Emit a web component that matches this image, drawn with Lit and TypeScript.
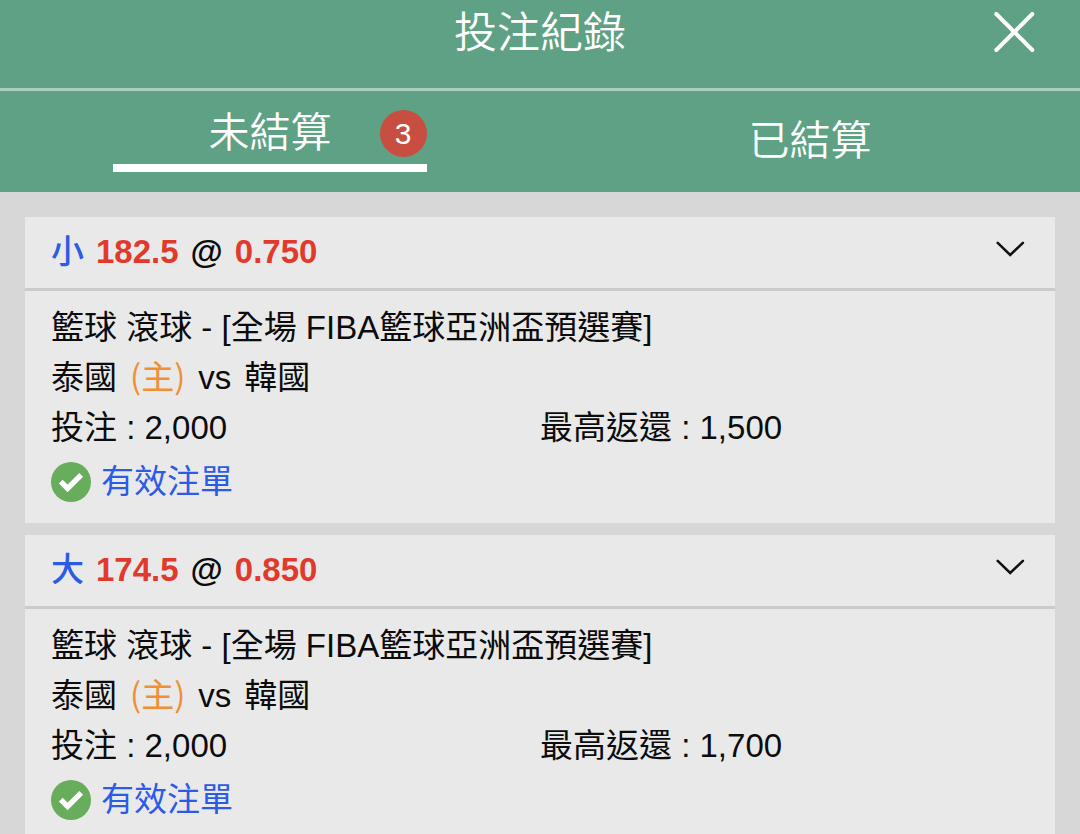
import { LitElement, html, css, nothing } from "lit";
import { customElement, property, state } from "lit/decorators.js";

interface Bet {
  pick: string;
  line: string;
  odds: string;
  event: string;
  home: string;
  away: string;
  stake: string;
  payout: string;
  status: string;
}

const EVENT = "籃球 滾球 - [全場 FIBA籃球亞洲盃預選賽]";

const OPEN_BETS: Bet[] = [
  { pick: "小", line: "182.5", odds: "0.750", event: EVENT, home: "泰國", away: "韓國", stake: "2,000", payout: "1,500", status: "有效注單" },
  { pick: "大", line: "174.5", odds: "0.850", event: EVENT, home: "泰國", away: "韓國", stake: "2,000", payout: "1,700", status: "有效注單" },
];

const reset = css`
  * {
    box-sizing: border-box;
  }
  button {
    margin: 0;
    padding: 0;
    border: 0;
    background: none;
    color: inherit;
    font: inherit;
    cursor: pointer;
  }
  svg {
    display: block;
    flex: none;
  }
`;

@customElement("bet-card")
export class BetCard extends LitElement {
  @property({ attribute: false }) bet!: Bet;
  @state() private open = true;

  static styles = [
    reset,
    css`
      :host {
        display: block;
        background: #e9e9e9;
      }
      .title {
        margin: 0;
        font-size: inherit;
      }
      .summary {
        display: flex;
        align-items: center;
        justify-content: space-between;
        width: 100%;
        padding: 10px 30px 12px 26px;
        border-bottom: 3px solid #cbcbcb;
        line-height: 49px;
        font-weight: 700;
      }
      .selection,
      .teams {
        display: flex;
        align-items: baseline;
        gap: 12px;
      }
      .pick {
        color: #2c5be6;
        font-weight: 500;
      }
      .number {
        color: #e13a2d;
      }
      .details {
        padding: 12px 26px;
        line-height: 50px;
      }
      .details p {
        margin: 0;
      }
      .details .teams {
        gap: 13px;
      }
      .home-mark {
        color: #f08f35;
        font-family: "Noto Sans CJK TC", sans-serif;
        line-height: 1;
      }
      .amounts {
        display: grid;
        grid-template-columns: 1fr 1fr;
      }
      .status {
        display: flex;
        align-items: center;
        gap: 10px;
        min-height: 58px;
        color: #2c5be6;
      }
    `,
  ];

  render() {
    const b = this.bet;
    return html`
      <h2 class="title">
        <button class="summary" type="button" aria-expanded=${this.open} @click=${() => (this.open = !this.open)}>
          <span class="selection">
            <span class="pick">${b.pick}</span>
            <span class="number">${b.line}</span>
            <span>@</span>
            <span class="number">${b.odds}</span>
          </span>
          <svg width="30" height="22" viewBox="0 0 30 22" aria-hidden="true">
            <path d="M2.7 1.9 15.2 14 27.9 1.9" fill="none" stroke="#111" stroke-width="2.5" stroke-linecap="round" />
          </svg>
        </button>
      </h2>
      ${this.open
        ? html`
            <div class="details">
              <p>${b.event}</p>
              <p class="teams">
                <span>${b.home}</span><span class="home-mark">(主)</span><span>vs</span><span>${b.away}</span>
              </p>
              <p class="amounts"><span>投注 : ${b.stake}</span><span>最高返還 : ${b.payout}</span></p>
              <p class="status">
                <svg width="40" height="40" viewBox="0 0 40 40" aria-hidden="true">
                  <circle cx="20" cy="20" r="20" fill="#67ad5b" />
                  <path d="M9.8 19.6 16.6 26.4 30.2 12.8" fill="none" stroke="#fff" stroke-width="5.4" />
                </svg>
                <span>${b.status}</span>
              </p>
            </div>
          `
        : nothing}
    `;
  }
}

@customElement("app-root")
export class AppRoot extends LitElement {
  @state() private tab: "open" | "settled" = "open";

  static styles = [
    reset,
    css`
      :host {
        display: block;
        min-height: 100vh;
        background: #d7d7d7;
        color: #0c0c0c;
        font-family: "Liberation Sans", "Noto Sans CJK TC", sans-serif;
        font-size: 33px;
      }
      .bar {
        display: grid;
        grid-template-columns: 1fr auto 1fr;
        align-items: center;
        padding: 0 45px 22px;
        border-bottom: 3px solid #aacdbd;
        background: #5ea184;
        color: #fff;
      }
      .bar h1 {
        grid-column: 2;
        margin: 0;
        font-size: 43px;
        font-weight: 350;
        line-height: 66px;
      }
      .close {
        justify-self: end;
      }
      .tabs {
        display: grid;
        grid-template-columns: 1fr 1fr;
        align-items: end;
        padding: 12px 0 20px;
        background: #5ea184;
        color: #fff;
        font-size: 41px;
        font-weight: 350;
        line-height: 61px;
      }
      .tab {
        display: grid;
        grid-template-columns: 1fr auto 1fr;
        align-items: center;
        justify-self: center;
        width: 58%;
      }
      .tab[aria-selected="true"] {
        border-bottom: 8px solid #fff;
      }
      .label {
        grid-column: 2;
      }
      .badge {
        justify-self: end;
        width: 47px;
        height: 47px;
        border-radius: 50%;
        background: #c84e42;
        font-size: 30px;
        font-weight: 400;
        line-height: 47px;
      }
      .list {
        display: grid;
        gap: 12px;
        padding: 25px;
      }
    `,
  ];

  render() {
    const open = this.tab === "open";
    return html`
      <header class="bar">
        <h1>投注紀錄</h1>
        <button class="close" type="button" aria-label="關閉">
          <svg width="42" height="42" viewBox="0 0 42 42" aria-hidden="true">
            <path d="M3.3 2 39.3 38M39.3 2 3.3 38" fill="none" stroke="#fff" stroke-width="4" stroke-linecap="round" />
          </svg>
        </button>
      </header>
      <div class="tabs" role="tablist">
        <button class="tab" type="button" role="tab" aria-selected=${open} @click=${() => (this.tab = "open")}>
          <span class="label">未結算</span><span class="badge">3</span>
        </button>
        <button class="tab" type="button" role="tab" aria-selected=${!open} @click=${() => (this.tab = "settled")}>
          <span class="label">已結算</span>
        </button>
      </div>
      <main class="list" role="tabpanel">
        ${open ? OPEN_BETS.map((bet) => html`<bet-card .bet=${bet}></bet-card>`) : nothing}
      </main>
    `;
  }
}
